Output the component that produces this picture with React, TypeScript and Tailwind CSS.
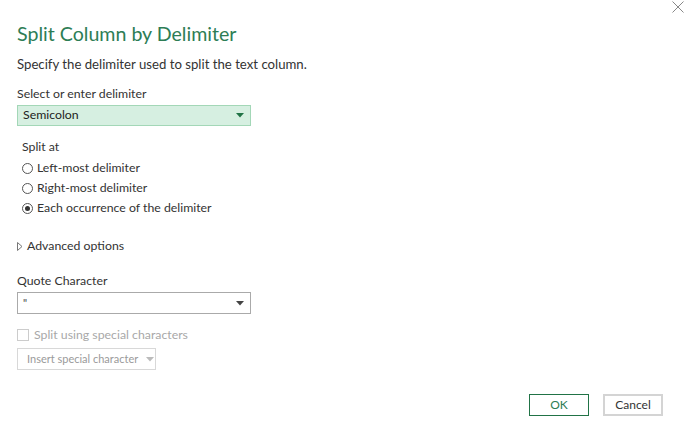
import React from "react";

const font = { fontFamily: '"Segoe UI", Lato, "Open Sans", sans-serif' };

function Radio({ checked, label }: { checked?: boolean; label: string }) {
  return (
    <div className="flex items-center h-[20px]">
      <span className="w-[11px] h-[11px] rounded-full border border-[#555] flex items-center justify-center bg-white">
        {checked && <span className="w-[5px] h-[5px] rounded-full bg-[#333]" />}
      </span>
      <span className="ml-[4px] text-[12.3px] text-[#333]">{label}</span>
    </div>
  );
}

function Caret({ color }: { color: string }) {
  return (
    <svg width="8" height="5" viewBox="0 0 8 5">
      <path d="M0 0 L8 0 L4 4.5 Z" fill={color} />
    </svg>
  );
}

export default function App() {
  return (
    <div className="w-[688px] h-[432px] bg-white relative overflow-hidden" style={font}>
      <div className="flex justify-end pr-[4px] pt-[1px] h-[14px]">
        <svg width="12" height="12" viewBox="0 0 12 12">
          <path d="M0.5 0.5 L11.5 11.5 M11.5 0.5 L0.5 11.5" stroke="#888" strokeWidth="1" />
        </svg>
      </div>
      <div className="pl-[17px] flex flex-col">
        <div className="mt-[6px] text-[19.6px] leading-[28px] text-[#2d7d55]">Split Column by Delimiter</div>
        <div className="mt-[6px] text-[13.2px] leading-[20px] text-[#333]">
          Specify the delimiter used to split the text column.
        </div>
        <div className="mt-[11px] text-[12.3px] leading-[18px] text-[#333]">Select or enter delimiter</div>
        <div className="mt-[2px] w-[234px] h-[21px] bg-[#d6efe1] border border-[#a3d7b7] flex items-center justify-between pl-[5px] pr-[6px]">
          <span className="text-[12.3px] text-[#222]">Semicolon</span>
          <Caret color="#217346" />
        </div>
        <div className="mt-[12px] pl-[5px] flex flex-col">
          <div className="text-[12.3px] leading-[18px] text-[#333]">Split at</div>
          <div className="mt-[2px] flex flex-col">
            <Radio label="Left-most delimiter" />
            <Radio label="Right-most delimiter" />
            <Radio checked label="Each occurrence of the delimiter" />
          </div>
        </div>
        <div className="mt-[18px] flex items-center h-[20px]">
          <svg width="6" height="9" viewBox="0 0 6 9">
            <path d="M0.5 0.5 L5 4.5 L0.5 8.5 Z" fill="none" stroke="#777" strokeWidth="1" />
          </svg>
          <span className="ml-[4px] text-[12.3px] text-[#333]">Advanced options</span>
        </div>
        <div className="mt-[16px] text-[12.3px] leading-[18px] text-[#333]">Quote Character</div>
        <div className="mt-[2px] w-[234px] h-[22px] bg-white border border-[#aaa] flex items-center justify-between pl-[5px] pr-[6px]">
          <span className="text-[11px] text-[#444]">"</span>
          <Caret color="#444" />
        </div>
        <div className="mt-[14px] flex items-center h-[14px]">
          <span className="w-[12px] h-[12px] border border-[#ccc] bg-white" />
          <span className="ml-[5px] text-[12.3px] text-[#a8a8a8]">Split using special characters</span>
        </div>
        <div className="mt-[6px] w-[139px] h-[22px] border border-[#d8d8d8] flex items-center pl-[9px] whitespace-nowrap">
          <span className="text-[11px] text-[#9a9a9a]">Insert special character</span>
          <span className="ml-[8px]"><Caret color="#bbb" /></span>
        </div>
      </div>
      <div className="absolute left-0 right-0 top-[394px] flex justify-end gap-[14px] pr-[25px]">
        <button className="w-[60px] h-[22px] border border-[#217346] text-[12px] text-[#2d7d55] bg-white">OK</button>
        <button className="w-[60px] h-[22px] border-2 border-[#d4d4d4] text-[12px] text-[#333] bg-white">Cancel</button>
      </div>
    </div>
  );
}
